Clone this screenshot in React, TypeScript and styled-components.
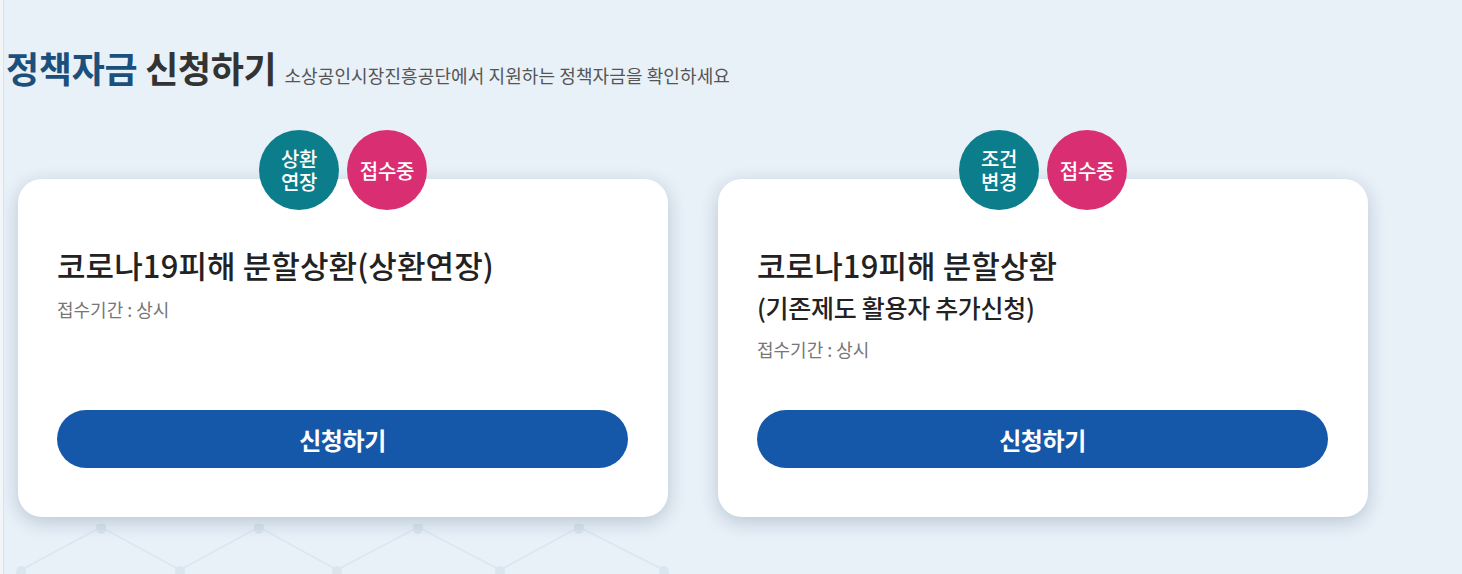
import React from 'react';
import styled, { createGlobalStyle } from 'styled-components';

const GlobalStyle = createGlobalStyle`
  html, body {
    margin: 0;
    padding: 0;
    background: #f3f6f9;
  }
  body {
    font-family: 'Noto Sans CJK KR', 'Noto Sans', sans-serif;
    color: #222;
  }
  * {
    box-sizing: border-box;
  }
`;

const Page = styled.div`
  position: relative;
  margin-left: 3px;
  min-height: 100vh;
  padding: 45px 0 0 2px;
  background: #e8f0f8;
  border-left: 1px solid #dce2e8;
  overflow: hidden;
`;

const HeadingRow = styled.div`
  display: flex;
  align-items: baseline;
  gap: 8px;
`;

const Heading = styled.h2`
  margin: 0;
  font-size: 36px;
  line-height: 44px;
  font-weight: 700;
  letter-spacing: -0.3px;
  color: #333;

  em {
    font-style: normal;
    color: #1b4f7c;
  }
`;

const SubHeading = styled.p`
  margin: 0;
  font-size: 18px;
  line-height: 24px;
  letter-spacing: 0.1px;
  color: #555;
`;

const CardRow = styled.div`
  position: relative;
  z-index: 1;
  display: flex;
  gap: 50px;
  margin-top: 90px;
  padding-left: 12px;
`;

const Card = styled.div`
  position: relative;
  display: flex;
  flex-direction: column;
  width: 650px;
  height: 338px;
  padding: 64px 40px 49px 39px;
  background: #fff;
  border-radius: 24px;
  box-shadow: 0 5px 18px rgba(40, 70, 100, 0.24);
`;

const Badges = styled.div`
  position: absolute;
  top: -49px;
  left: 0;
  right: 0;
  display: flex;
  justify-content: center;
  gap: 8px;
`;

const Badge = styled.span<{ $color: string }>`
  display: flex;
  flex-direction: column;
  align-items: center;
  justify-content: center;
  width: 80px;
  height: 80px;
  border-radius: 50%;
  background: ${(p) => p.$color};
  color: #fff;
  font-size: 20px;
  line-height: 23px;
  font-weight: 500;
  text-align: center;
  letter-spacing: -0.3px;
`;

const BadgeLine = styled.span`
  display: block;
`;

const Title = styled.h3`
  margin: 0;
  font-size: 31px;
  line-height: 44px;
  font-weight: 500;
  letter-spacing: 0.1px;
  color: #222;
`;

const TitleSub = styled.span`
  display: block;
  font-size: 25px;
  line-height: 40px;
  letter-spacing: -0.3px;
`;

const Period = styled.p`
  margin: 10px 0 0 0;
  font-size: 18px;
  line-height: 24px;
  letter-spacing: 0;
  color: #777;
`;

const ApplyButton = styled.button`
  margin-top: auto;
  width: 100%;
  height: 58px;
  border: none;
  border-radius: 29px;
  background: #1558a9;
  color: #fff;
  font-family: inherit;
  font-size: 24px;
  font-weight: 700;
  letter-spacing: -0.4px;
  cursor: pointer;
`;

const Network = styled.svg`
  position: absolute;
  left: 0;
  bottom: 0;
  z-index: 0;
  opacity: 0.55;
`;

const topDots = [97, 255, 414, 575];
const bottomDots = [17, 176, 333, 496, 660];

const NetworkPattern = () => {
  const points: [number, number][] = [];
  bottomDots.forEach((x, i) => {
    points.push([x, 46]);
    if (topDots[i] !== undefined) points.push([topDots[i], 3]);
  });
  return (
    <Network width="700" height="50" viewBox="0 0 700 50">
      <polyline
        points={points.map((p) => p.join(',')).join(' ')}
        fill="none"
        stroke="#cfdfea"
        strokeWidth="1.5"
      />
      {topDots.map((x) => (
        <ellipse key={x} cx={x} cy={4} rx={5} ry={6} fill="#c8dbe7" />
      ))}
      {bottomDots.map((x) => (
        <ellipse key={x} cx={x} cy={48} rx={5} ry={6} fill="#cddfe9" />
      ))}
    </Network>
  );
};

type Policy = {
  badge: string[];
  title: string;
  sub?: string;
};

const policies: Policy[] = [
  { badge: ['상환', '연장'], title: '코로나19피해 분할상환(상환연장)' },
  { badge: ['조건', '변경'], title: '코로나19피해 분할상환', sub: '(기존제도 활용자 추가신청)' },
];

const App = () => {
  return (
    <>
      <GlobalStyle />
      <Page>
        <HeadingRow>
          <Heading>
            <em>정책자금</em> 신청하기
          </Heading>
          <SubHeading>소상공인시장진흥공단에서 지원하는 정책자금을 확인하세요</SubHeading>
        </HeadingRow>

        <CardRow>
          {policies.map((p) => (
            <Card key={p.title + (p.sub ?? '')}>
              <Badges>
                <Badge $color="#0c7d8b">
                  {p.badge.map((line) => (
                    <BadgeLine key={line}>{line}</BadgeLine>
                  ))}
                </Badge>
                <Badge $color="#d92f72">접수중</Badge>
              </Badges>
              <Title>
                {p.title}
                {p.sub && <TitleSub>{p.sub}</TitleSub>}
              </Title>
              <Period>접수기간 : 상시</Period>
              <ApplyButton>신청하기</ApplyButton>
            </Card>
          ))}
        </CardRow>

        <NetworkPattern />
      </Page>
    </>
  );
};

export default App;
